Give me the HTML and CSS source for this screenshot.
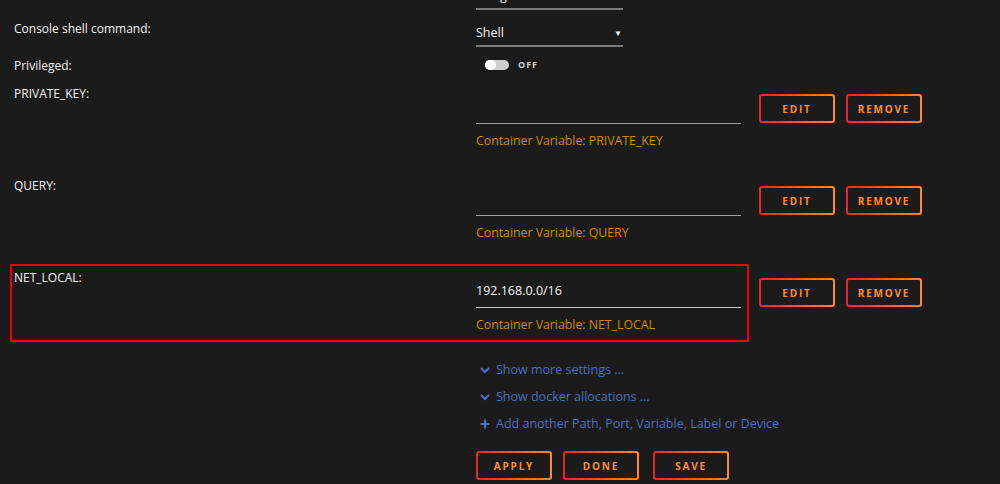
FILE: index.html
```html
<!DOCTYPE html>
<html lang="en">
<head>
    <meta charset="UTF-8">
    <meta name="viewport" content="width=device-width, initial-scale=1.0">
    <title>Edit Container</title>
    <link rel="stylesheet" href="styles.css">
</head>
<body>
    <div class="form">
        <div class="row first">
            <div class="label"></div>
            <div class="select short">Bridge</div>
        </div>

        <div class="row">
            <div class="label">Console shell command:</div>
            <div class="select short">Shell<span class="arrow">&#9660;</span></div>
        </div>

        <div class="row">
            <div class="label">Privileged:</div>
            <div class="switch-wrap">
                <span class="switch"><span class="knob"></span></span>
                <span class="switch-text">OFF</span>
            </div>
        </div>

        <div class="config">
            <div class="config-main">
                <div class="label">PRIVATE_KEY:</div>
                <div class="field">
                    <div class="input"></div>
                    <div class="desc">Container Variable: PRIVATE_KEY</div>
                </div>
            </div>
            <div class="actions">
                <button class="btn">Edit</button>
                <button class="btn">Remove</button>
            </div>
        </div>

        <div class="config">
            <div class="config-main">
                <div class="label">QUERY:</div>
                <div class="field">
                    <div class="input"></div>
                    <div class="desc">Container Variable: QUERY</div>
                </div>
            </div>
            <div class="actions">
                <button class="btn">Edit</button>
                <button class="btn">Remove</button>
            </div>
        </div>

        <div class="config">
            <div class="config-main highlight">
                <div class="label">NET_LOCAL:</div>
                <div class="field">
                    <div class="input filled">192.168.0.0/16</div>
                    <div class="desc">Container Variable: NET_LOCAL</div>
                </div>
            </div>
            <div class="actions">
                <button class="btn">Edit</button>
                <button class="btn">Remove</button>
            </div>
        </div>

        <div class="links">
            <a class="link" href="#">
                <svg class="icon" viewBox="0 0 10 10"><path d="M1 3 L5 7 L9 3" fill="none" stroke="currentColor" stroke-width="2.2"/></svg>
                Show more settings ...
            </a>
            <a class="link" href="#">
                <svg class="icon" viewBox="0 0 10 10"><path d="M1 3 L5 7 L9 3" fill="none" stroke="currentColor" stroke-width="2.2"/></svg>
                Show docker allocations ...
            </a>
            <a class="link" href="#">
                <svg class="icon" viewBox="0 0 10 10"><path d="M5 0.5 V9.5 M0.5 5 H9.5" fill="none" stroke="currentColor" stroke-width="2.2"/></svg>
                Add another Path, Port, Variable, Label or Device
            </a>
        </div>

        <div class="footer-buttons">
            <button class="btn">Apply</button>
            <button class="btn">Done</button>
            <button class="btn save">Save</button>
        </div>
    </div>
</body>
</html>
```

FILE: styles.css
```css
:root {
    --background-color: #1c1b1b;
    --text-color: #f2f2f2;
    --desc-color: #d1870d;
    --link-color: #4a70bd;
    --btn-start: #e22828;
    --btn-end: #ff8c2f;
}

body {
    font-family: 'Open Sans', 'Liberation Sans', Arial, sans-serif;
    font-size: 12px;
    line-height: 18px;
    margin: 0;
    padding: 0;
    background-color: var(--background-color);
    color: var(--text-color);
    overflow: hidden;
}

.form {
    padding-left: 14px;
}

.row {
    display: flex;
    margin-bottom: 10px;
}

.row.first {
    margin-top: -17px;
}

.label {
    width: 462px;
    flex-shrink: 0;
}

.select {
    box-sizing: border-box;
    height: 27px;
    padding-top: 4px;
    border-bottom: 2px solid #7a7a7a;
    font-size: 12.5px;
    display: flex;
    justify-content: space-between;
}

.select.short {
    width: 147px;
}

.arrow {
    font-size: 8px;
    margin-right: 1px;
}

.switch-wrap {
    display: flex;
    align-items: center;
    padding-left: 9px;
    height: 15px;
}

.switch {
    display: flex;
    width: 24px;
    height: 10px;
    border-radius: 5px;
    background-color: #cfcfcf;
}

.knob {
    width: 11px;
    height: 10px;
    border-radius: 5px;
    background-color: #fff;
}

.switch-text {
    margin-left: 9px;
    font-size: 9px;
    font-weight: bold;
    letter-spacing: 1px;
    color: #d0d0d0;
}

.config {
    display: flex;
    margin-bottom: 27px;
}

.config-main {
    display: flex;
    position: relative;
}

.highlight::after {
    content: '';
    position: absolute;
    top: -5px;
    left: -4px;
    right: -8px;
    bottom: -8px;
    border: 2px solid #ee0000;
}

.field {
    width: 265px;
    padding-top: 10px;
}

.input {
    box-sizing: border-box;
    height: 29px;
    padding-top: 3px;
    border-bottom: 1px solid #a0a0a0;
    font-size: 12.5px;
}

.input.filled {
    border-bottom-color: #c8c8c8;
}

.desc {
    margin-top: 8px;
    color: var(--desc-color);
    font-size: 12.3px;
}

.actions {
    display: flex;
    gap: 11px;
    margin-left: 18px;
    padding-top: 9px;
}

.btn {
    box-sizing: border-box;
    width: 76px;
    height: 29px;
    padding: 0;
    border: 2px solid transparent;
    border-radius: 3px;
    background: linear-gradient(var(--background-color), var(--background-color)) padding-box,
                linear-gradient(90deg, var(--btn-start), var(--btn-end)) border-box;
    color: var(--btn-end);
    font-family: 'Open Sans', 'Liberation Sans', Arial, sans-serif;
    font-size: 10px;
    font-weight: bold;
    letter-spacing: 1.8px;
    text-transform: uppercase;
    cursor: pointer;
}

.links {
    display: flex;
    flex-direction: column;
    gap: 9px;
    margin-top: 1px;
    padding-left: 462px;
}

.link {
    display: flex;
    align-items: center;
    color: var(--link-color);
    text-decoration: none;
    font-size: 12.5px;
}

.icon {
    width: 10px;
    height: 10px;
    margin-left: 4px;
    margin-right: 6px;
}

.footer-buttons {
    display: flex;
    gap: 11px;
    margin-top: 18px;
    padding-left: 462px;
}

.btn.save {
    margin-left: 3px;
}
```
